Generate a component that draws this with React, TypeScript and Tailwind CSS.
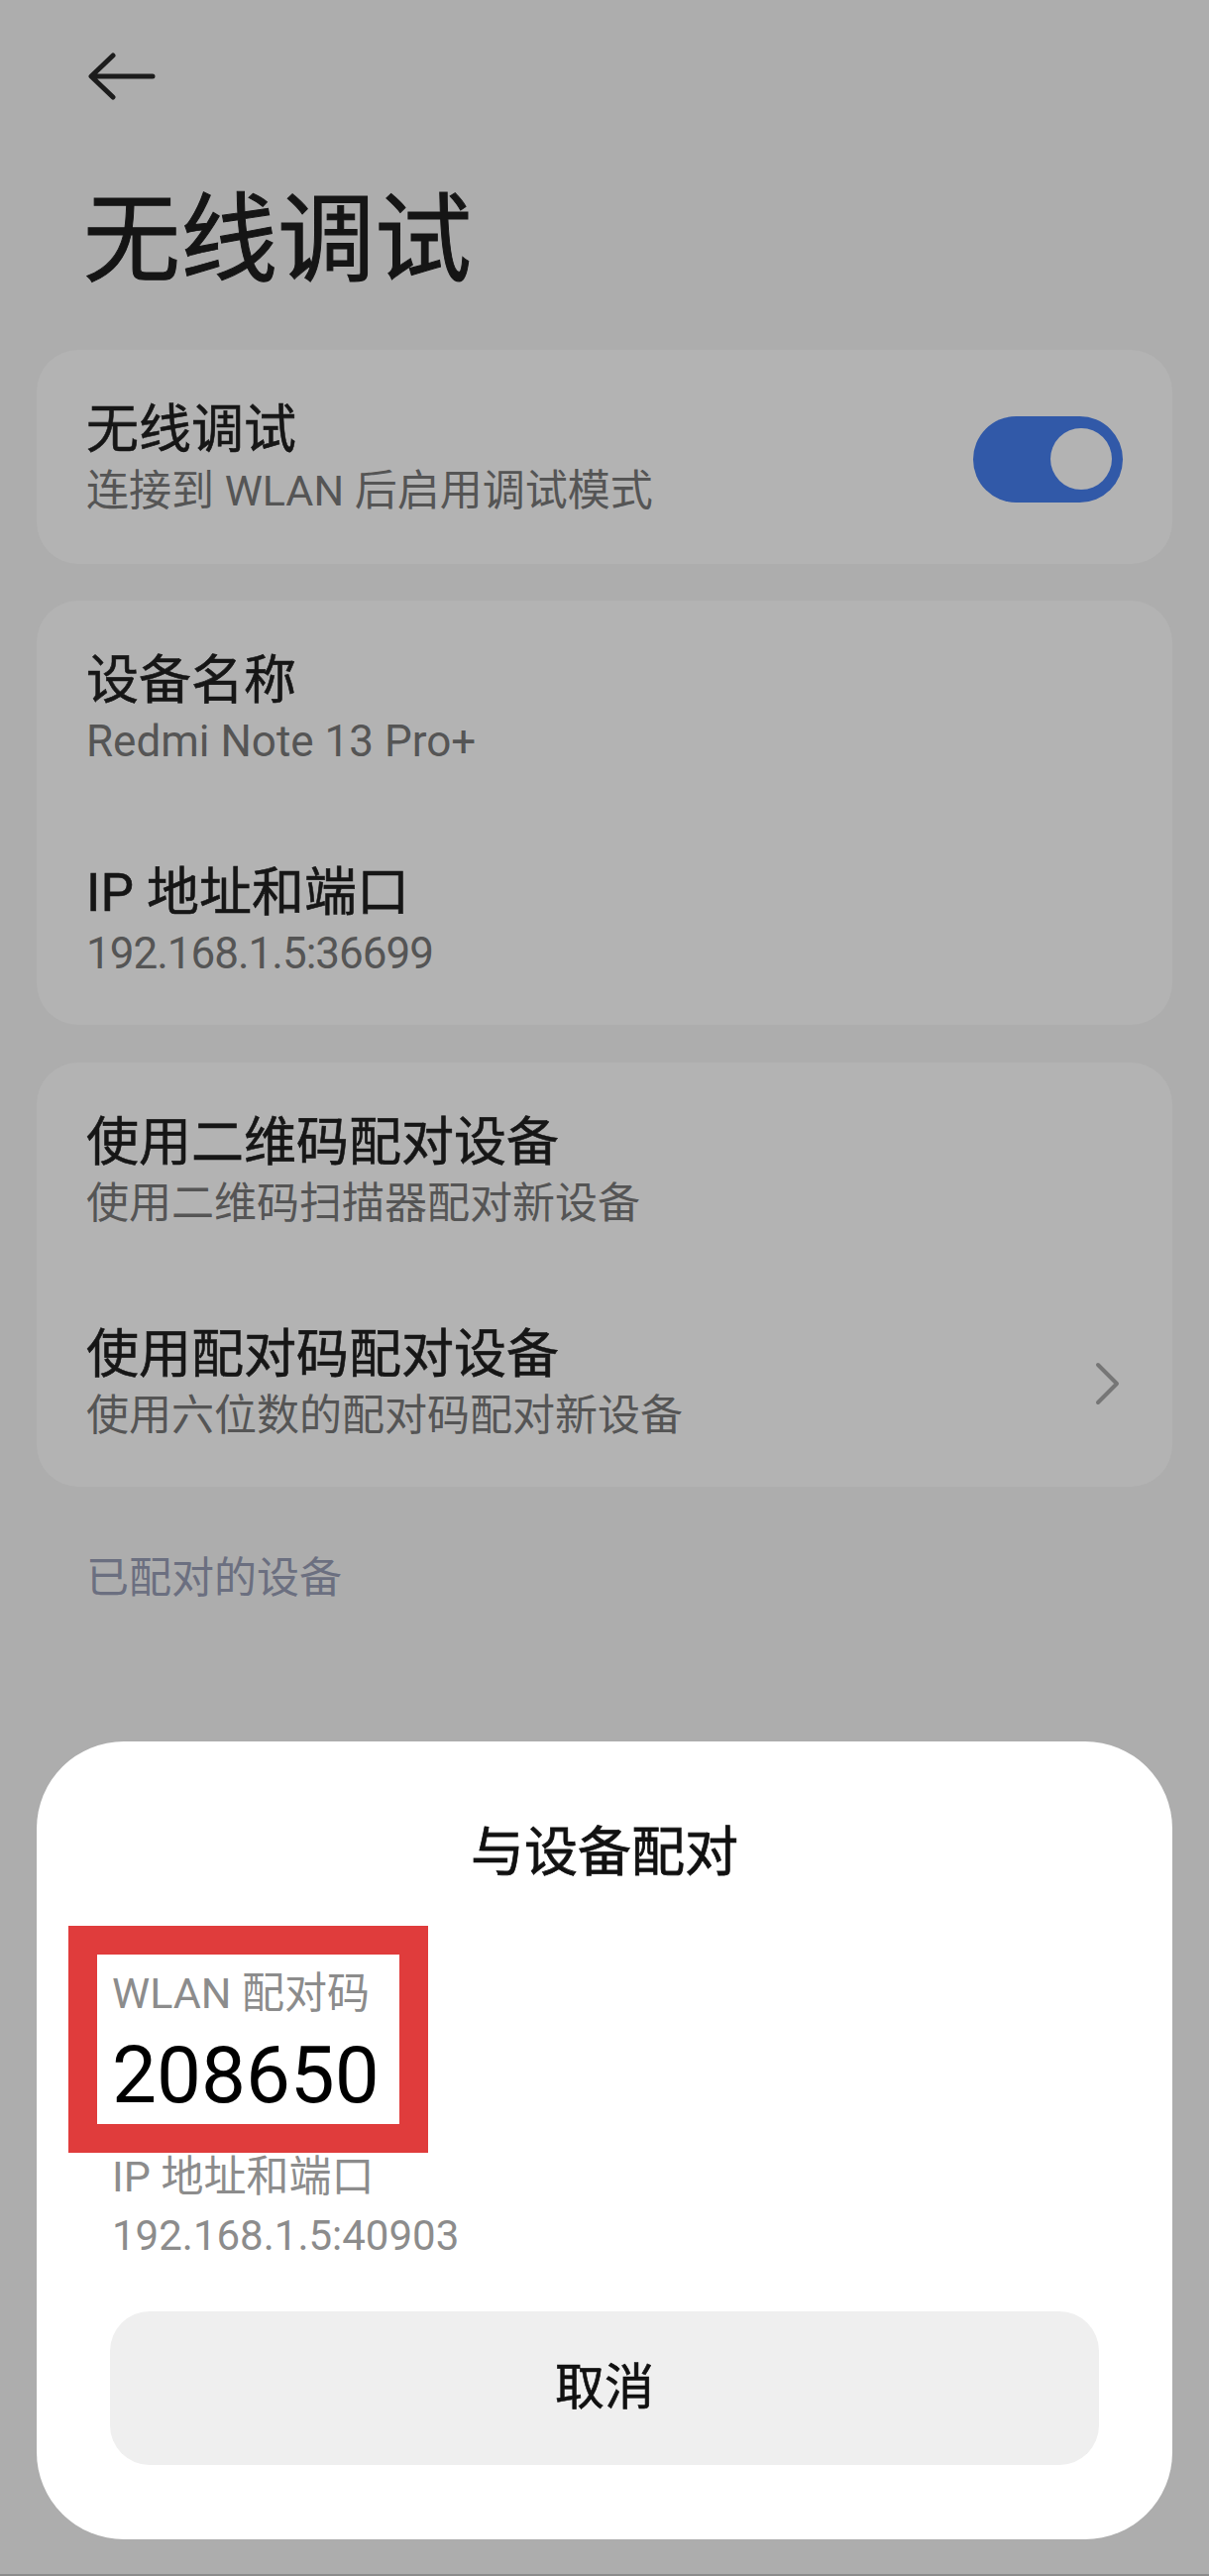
import { ReactNode } from "react";

const font = "font-['Roboto','Noto_Sans_CJK_SC',sans-serif]";

type RowProps = {
  title: string;
  sub: string;
  subClass?: string;
  right?: ReactNode;
  pad?: string;
};

const Row = ({ title, sub, subClass = "text-[43px]", right, pad = "pt-[49px] pb-[43px]" }: RowProps) => (
  <div className={`flex items-center justify-between pl-[50px] pr-[50px] ${pad}`}>
    <div className="flex flex-col">
      <span className="text-[53px] leading-[64px] text-[#161616] [-webkit-text-stroke:0.6px_#161616]">{title}</span>
      <span className={`leading-[58px] text-[#555555] ${subClass}`}>{sub}</span>
    </div>
    {right}
  </div>
);

const Toggle = () => (
  <div className="w-[151px] h-[87px] rounded-full bg-[#3159a8] flex items-center justify-end pr-[11px]">
    <div className="w-[62px] h-[62px] rounded-full bg-[#b3b3b3]" />
  </div>
);

const Chevron = () => (
  <svg width="26" height="44" viewBox="0 0 26 44" className="mr-[2px]">
    <path d="M3 3 L22 22 L3 41" fill="none" stroke="#767676" strokeWidth="4" strokeLinecap="round" strokeLinejoin="round" />
  </svg>
);

export default function App() {
  return (
    <div className={`relative w-[1220px] h-[2599px] bg-[#adadad] border-b-2 border-[#8c8c8c] overflow-hidden ${font}`}>
      <div className="flex flex-col px-[37px]">
        {/* back arrow */}
        <svg width="68" height="48" viewBox="0 0 68 48" className="mt-[53px] ml-[52px]">
          <path d="M65 24 H4 M25 3 L3 24 L25 45" fill="none" stroke="#1c1c1c" strokeWidth="5" strokeLinecap="round" strokeLinejoin="round" />
        </svg>

        <h1 className="mt-[84px] ml-[47px] text-[98px] leading-[115px] text-[#151515] [-webkit-text-stroke:1px_#151515]">无线调试</h1>

        <div className="mt-[53px] rounded-[42px] bg-[#b3b3b3]">
          <Row title="无线调试" sub="连接到 WLAN 后启用调试模式" pad="pt-[49px] pb-[45px]" right={<Toggle />} />
        </div>

        <div className="mt-[37px] rounded-[42px] bg-[#b3b3b3]">
          <Row title="设备名称" sub="Redmi Note 13 Pro+" subClass="text-[44px]" />
          <Row title="IP 地址和端口" sub="192.168.1.5:36699" subClass="text-[44px] tracking-[-1px]" />
        </div>

        <div className="mt-[38px] rounded-[42px] bg-[#b3b3b3]">
          <Row title="使用二维码配对设备" sub="使用二维码扫描器配对新设备" />
          <Row title="使用配对码配对设备" sub="使用六位数的配对码配对新设备" right={<Chevron />} />
        </div>

        <p className="mt-[64px] ml-[50px] text-[43px] leading-[56px] text-[#6b6f80]">已配对的设备</p>
      </div>

      {/* pairing bottom sheet */}
      <div className="absolute left-[37px] right-[37px] top-[1757px] rounded-[88px] bg-white flex flex-col px-[74px] pt-[77px] pb-[75px]">
        <h2 className="text-center text-[54px] leading-[72px] text-[#111111] [-webkit-text-stroke:0.8px_#111111]">与设备配对</h2>

        <div className="relative self-start mt-[77px] pl-[2px]">
          <div className="text-[43px] leading-[56px] text-[#8c8c8c]">WLAN 配对码</div>
          <div className="mt-[7px] text-[80px] leading-[96px] text-black">208650</div>
          {/* red highlight frame */}
          <div className="absolute -top-[40px] -left-[42px] w-[363px] h-[229px] border-[29px] border-[#e03c3c]" />
        </div>

        <div className="mt-[26px] pl-[2px] text-[43px] leading-[56px] text-[#8c8c8c]">IP 地址和端口</div>
        <div className="mt-[4px] pl-[2px] text-[42px] leading-[56px] text-[#8c8c8c]">192.168.1.5:40903</div>

        <button className="mt-[48px] h-[155px] rounded-[40px] bg-[#efefef] text-[50px] text-[#111111] [-webkit-text-stroke:0.6px_#111111] flex items-center justify-center">
          取消
        </button>
      </div>
    </div>
  );
}
